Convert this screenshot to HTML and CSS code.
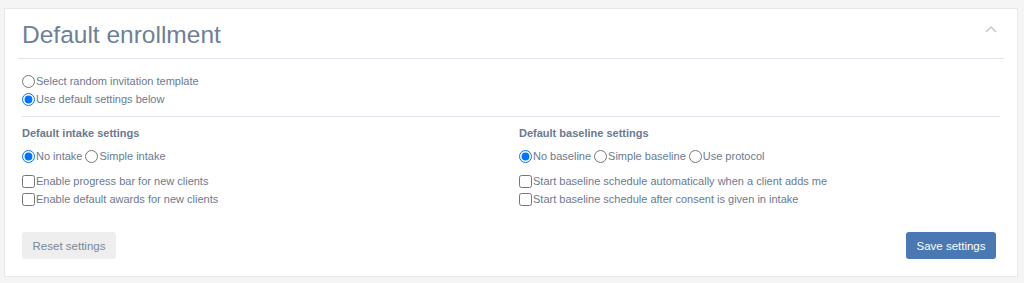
FILE: index.html
```html
<!DOCTYPE html>
<html>
<head>
<meta charset="utf-8">
<link rel="stylesheet" href="styles.css">
</head>
<body>
<div class="card">
  <div class="card-header">
    <h2 class="title">Default enrollment</h2>
    <svg class="chevron" width="12" height="8" viewBox="0 0 12 8"><path d="M1 7 L6 2 L11 7" fill="none" stroke="#c4c8cf" stroke-width="1.5"/></svg>
  </div>
  <div class="card-body">
    <div class="choice-list">
      <label class="opt"><input type="radio" name="mode"> Select random invitation template</label>
      <label class="opt"><input type="radio" name="mode" checked> Use default settings below</label>
    </div>
    <hr class="divider">
    <div class="cols">
      <div class="col">
        <div class="col-title">Default intake settings</div>
        <div class="radio-row">
          <label class="opt"><input type="radio" name="intake" checked> No intake</label>
          <label class="opt"><input type="radio" name="intake"> Simple intake</label>
        </div>
        <div class="checks">
          <label class="opt"><input type="checkbox"> Enable progress bar for new clients</label>
          <label class="opt"><input type="checkbox"> Enable default awards for new clients</label>
        </div>
      </div>
      <div class="col">
        <div class="col-title">Default baseline settings</div>
        <div class="radio-row">
          <label class="opt"><input type="radio" name="baseline" checked> No baseline</label>
          <label class="opt"><input type="radio" name="baseline"> Simple baseline</label>
          <label class="opt"><input type="radio" name="baseline"> Use protocol</label>
        </div>
        <div class="checks">
          <label class="opt"><input type="checkbox"> Start baseline schedule automatically when a client adds me</label>
          <label class="opt"><input type="checkbox"> Start baseline schedule after consent is given in intake</label>
        </div>
      </div>
    </div>
    <div class="actions">
      <button class="btn btn-reset">Reset settings</button>
      <button class="btn btn-save">Save settings</button>
    </div>
  </div>
</div>
</body>
</html>
```
FILE: styles.css
```css
html, body {
  margin: 0;
  padding: 0;
  background: #f5f5f5;
}
body {
  padding: 8px 6px 0 4px;
  font-family: "Liberation Sans", Arial, sans-serif;
  color: #6b7a90;
}
.card {
  background: #fff;
  border: 1px solid #e8e8e8;
  height: 269px;
  box-sizing: border-box;
}
.card-header {
  margin: 0 13px;
  height: 49px;
  border-bottom: 1px solid #e1e4ee;
  display: flex;
  align-items: flex-start;
  justify-content: space-between;
}
.title {
  margin: 12px 0 0 4px;
  font-size: 24.5px;
  font-weight: normal;
  color: #6f7f98;
  line-height: 28px;
}
.chevron {
  margin: 16px 7px 0 0;
}
.card-body {
  padding: 13px 17px 0 17px;
}
.opt {
  font-size: 11px;
  line-height: 18px;
  display: inline-flex;
  align-items: center;
  color: #6b7a90;
  white-space: nowrap;
}
.opt input {
  margin: 0 1px 0 0;
  width: 13px;
  height: 13px;
}
.choice-list {
  display: flex;
  flex-direction: column;
  align-items: flex-start;
}
.divider {
  border: 0;
  border-top: 1px solid #e1e4ee;
  margin: 8px 0 0 0;
}
.cols {
  display: grid;
  grid-template-columns: 497px 1fr;
  margin-top: 8px;
}
.col-title {
  font-size: 11px;
  font-weight: bold;
  line-height: 16px;
  color: #6b7a90;
}
.radio-row {
  display: flex;
  gap: 3px;
  margin-top: 6px;
}
.checks {
  display: flex;
  flex-direction: column;
  align-items: flex-start;
  margin-top: 7px;
}
.actions {
  display: flex;
  justify-content: space-between;
  margin-top: 24px;
  padding-right: 4px;
}
.btn {
  font-family: "Liberation Sans", Arial, sans-serif;
  font-size: 11.5px;
  height: 27px;
  padding: 0;
  border: 0;
  border-radius: 3px;
  white-space: nowrap;
}
.btn-reset {
  background: #eeeeee;
  color: #7a8799;
  width: 94px;
}
.btn-save {
  background: #4a78b3;
  color: #fff;
  width: 90px;
}
```
